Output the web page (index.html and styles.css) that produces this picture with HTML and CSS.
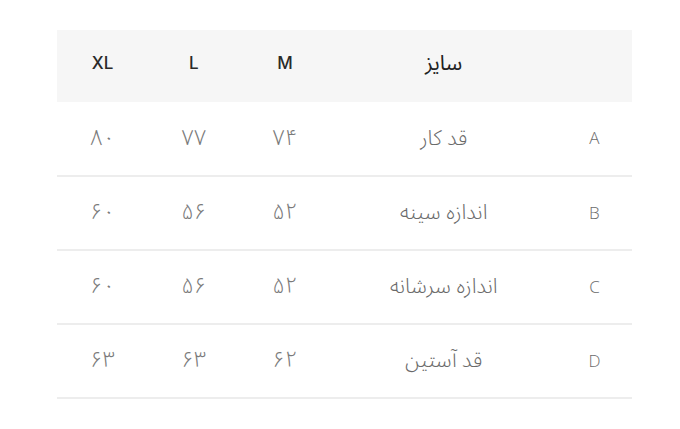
FILE: index.html
```html
<!DOCTYPE html>
<html lang="fa" dir="rtl">
<head>
<meta charset="utf-8">
<link rel="stylesheet" href="styles.css">
</head>
<body>
<div class="page">
  <table class="size-table">
    <colgroup>
      <col class="c-key">
      <col class="c-name">
      <col class="c-num">
      <col class="c-num">
      <col class="c-num">
    </colgroup>
    <thead>
      <tr>
        <th></th>
        <th class="fa">سایز</th>
        <th>M</th>
        <th>L</th>
        <th>XL</th>
      </tr>
    </thead>
    <tbody>
      <tr>
        <td>A</td>
        <td class="fa">قد کار</td>
        <td class="fa num">۷۴</td>
        <td class="fa num">۷۷</td>
        <td class="fa num">۸۰</td>
      </tr>
      <tr>
        <td>B</td>
        <td class="fa">اندازه سینه</td>
        <td class="fa num">۵۲</td>
        <td class="fa num">۵۶</td>
        <td class="fa num">۶۰</td>
      </tr>
      <tr>
        <td>C</td>
        <td class="fa">اندازه سرشانه</td>
        <td class="fa num">۵۲</td>
        <td class="fa num">۵۶</td>
        <td class="fa num">۶۰</td>
      </tr>
      <tr>
        <td>D</td>
        <td class="fa">قد آستین</td>
        <td class="fa num">۶۲</td>
        <td class="fa num">۶۳</td>
        <td class="fa num">۶۳</td>
      </tr>
    </tbody>
  </table>
</div>
</body>
</html>
```

FILE: styles.css
```css
html, body {
  margin: 0;
  padding: 0;
  background: #ffffff;
}

.page {
  padding: 30px 48px 0 57px;
}

.size-table {
  width: 575px;
  border-collapse: collapse;
  table-layout: fixed;
  font-family: "Open Sans", "DejaVu Sans", sans-serif;
}

.c-key { width: 75px; }
.c-name { width: 226px; }
.c-num { width: 91px; }

.size-table th,
.size-table td {
  padding: 0;
  text-align: center;
  vertical-align: middle;
}

.size-table thead tr {
  background: #f6f6f6;
  height: 72px;
}

.size-table th {
  font-family: "Inter", "Open Sans", sans-serif;
  font-size: 17px;
  font-weight: 500;
  color: #2a2a2a;
  padding-bottom: 6px;
}

.size-table tbody tr {
  height: 74px;
  border-bottom: 2px solid #ededed;
}

.size-table td {
  font-size: 17px;
  font-weight: 300;
  color: #6b6b6b;
  padding-bottom: 2px;
}

.size-table .fa {
  font-family: "Noto Sans Arabic", "DejaVu Sans", sans-serif;
  font-weight: 300;
  font-size: 21px;
  color: #6a6a6a;
}

.size-table .num {
  font-size: 22px;
  color: #7a7a7a;
}

.size-table th.fa {
  font-weight: 400;
  font-size: 21px;
  color: #222222;
}
```
